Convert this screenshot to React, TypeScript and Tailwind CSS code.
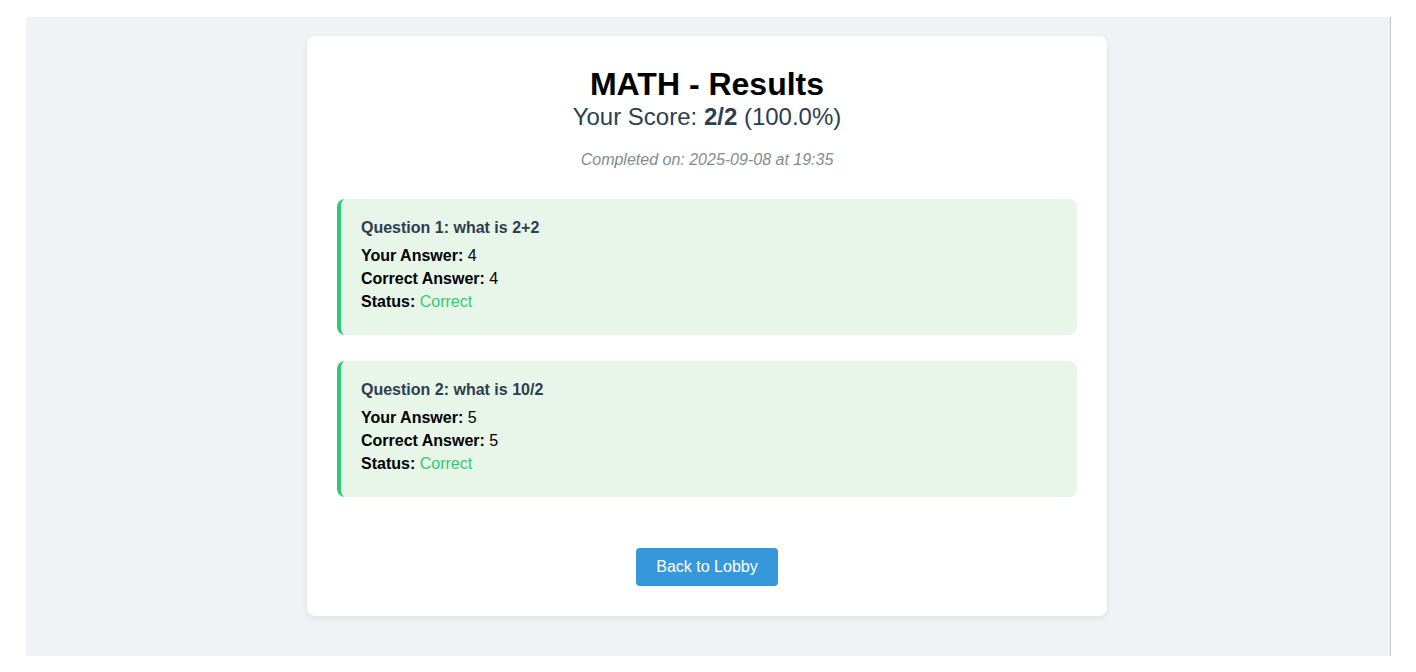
const questions = [
  { n: 1, text: 'what is 2+2', yours: '4', correct: '4' },
  { n: 2, text: 'what is 10/2', yours: '5', correct: '5' },
];

export default function App() {
  return (
    <div className="min-h-[672px] bg-white pt-[17px] pr-[25px] pl-[26px] font-['Liberation_Sans',Arial,sans-serif]">
      <div className="h-[639px] border-r border-[#c4c4c4] bg-[#f0f2f5] pt-[19px] pr-[2px]">
        <div className="mx-auto w-[800px] rounded-lg bg-white px-[30px] pt-[30px] pb-[30px] shadow-[0_2px_6px_rgba(0,0,0,0.08)]">
          <div className="text-center">
            <h2 className="text-[32px] leading-[37px] font-bold text-black">MATH - Results</h2>
            <p className="text-[24px] leading-[28px] text-[#2c3e50]">
              Your Score: <strong>2/2</strong> (100.0%)
            </p>
            <p className="mt-[20px] text-[16px] leading-[18px] italic text-[#7f8c8d]">
              Completed on: 2025-09-08 at 19:35
            </p>
          </div>

          <div className="mt-[30px] space-y-[26px]">
            {questions.map((q) => (
              <div
                key={q.n}
                className="h-[136px] rounded-lg border-l-4 border-[#2ecc71] bg-[#e8f5e9] px-5 pt-5 text-[16px] leading-[18px] text-black"
              >
                <h4 className="font-bold text-[#2c3e50]">
                  Question {q.n}: {q.text}
                </h4>
                <div className="mt-[10px] space-y-[5px]">
                  <p>
                    <strong>Your Answer:</strong> {q.yours}
                  </p>
                  <p>
                    <strong>Correct Answer:</strong> {q.correct}
                  </p>
                  <p>
                    <strong>Status:</strong> <span className="text-[#2ecc71]">Correct</span>
                  </p>
                </div>
              </div>
            ))}
          </div>

          <div className="mt-[51px] flex justify-center">
            <button className="h-[38px] w-[142px] rounded bg-[#3498db] text-[16px] text-white">
              Back to Lobby
            </button>
          </div>
        </div>
      </div>
    </div>
  );
}
